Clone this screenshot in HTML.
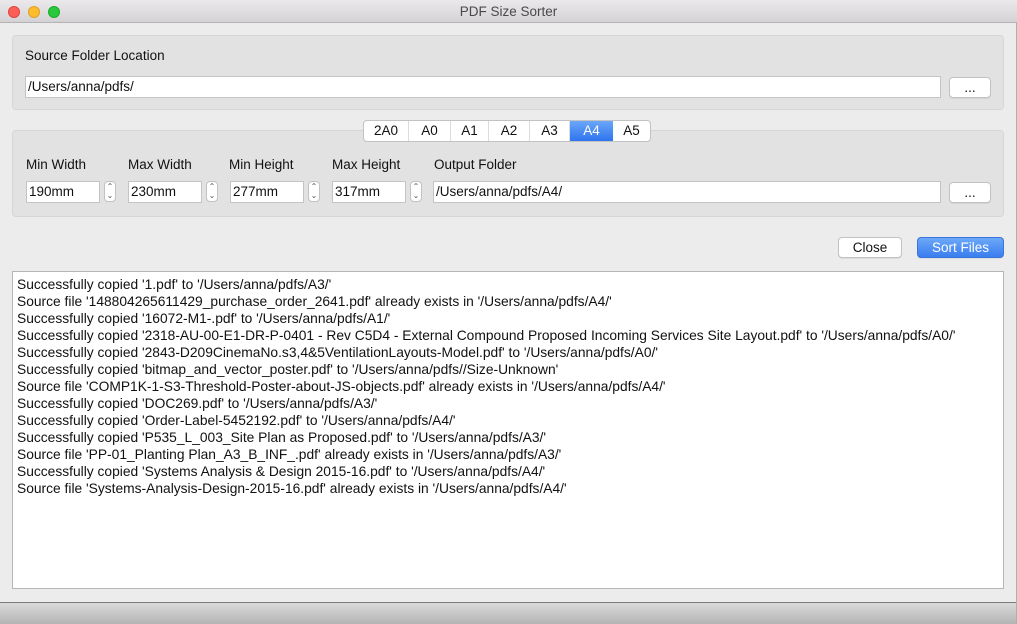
<!DOCTYPE html>
<html><head><meta charset="utf-8"><style>
*{box-sizing:border-box;margin:0;padding:0}
body{width:1017px;height:624px;overflow:hidden;background:#ececec;font-family:"Liberation Sans",sans-serif;font-size:13.5px;color:#111;position:relative}
.a{position:absolute}
.title{left:0;top:0;width:1017px;height:23px;background:linear-gradient(#ebe9eb,#d4d2d4);border-bottom:1px solid #b3b3b3;text-align:center;line-height:23px;font-size:13.5px;color:#4a4a4a}
.dot{top:6px;width:12px;height:12px;border-radius:50%}
.grp{background:#e2e2e2;border:1px solid #d6d6d6;border-radius:4px}
.in{background:#fff;border:1px solid #c4c4c4;height:22px;line-height:20px;padding-left:2px;font-size:13.5px}
.btn{background:#fff;border:1px solid #c2c2c2;border-radius:4px;text-align:center;line-height:19px;box-shadow:0 1px 0 rgba(0,0,0,.06)}
.st{width:12px;height:21px;background:#fff;border:1px solid #c2c2c2;border-radius:4px;font-size:8px;line-height:9px;text-align:center;color:#555}
.seg{top:120px;left:363px;height:22px;width:288px;background:#fff;border:1px solid #c2c2c2;border-radius:4px;display:flex;overflow:hidden}
.seg div{text-align:center;line-height:20px;border-right:1px solid #dcdcdc}
.log{left:12px;top:271px;width:992px;height:318px;background:#fff;border:1px solid #b5b5b5;padding:4px 0 0 4px;line-height:17px;font-size:13.8px;white-space:pre}
</style></head><body>
<div class="a title">PDF Size Sorter</div>
<div class="a dot" style="left:8px;background:#fc5f57;border:1px solid #e0443e"></div>
<div class="a dot" style="left:28px;background:#fdbc2e;border:1px solid #dea123"></div>
<div class="a dot" style="left:48px;background:#29c83f;border:1px solid #1aab29"></div>

<div class="a grp" style="left:12px;top:35px;width:992px;height:75px"></div>
<div class="a" style="left:25px;top:48px">Source Folder Location</div>
<div class="a in" style="left:25px;top:76px;width:916px">/Users/anna/pdfs/</div>
<div class="a btn" style="left:949px;top:77px;width:42px;height:21px">...</div>

<div class="a grp" style="left:12px;top:130px;width:992px;height:87px"></div>
<div class="a seg">
<div style="width:45px">2A0</div><div style="width:42px">A0</div><div style="width:38px">A1</div><div style="width:41px">A2</div><div style="width:40px">A3</div><div style="width:43px;background:linear-gradient(#6aa6f8,#2f74ee);color:#fff;border-right:none">A4</div><div style="width:37px;border-right:none">A5</div>
</div>
<div class="a" style="left:26px;top:157px">Min Width</div>
<div class="a" style="left:128px;top:157px">Max Width</div>
<div class="a" style="left:229px;top:157px">Min Height</div>
<div class="a" style="left:332px;top:157px">Max Height</div>
<div class="a" style="left:434px;top:157px">Output Folder</div>
<div class="a in" style="left:26px;top:181px;width:74px">190mm</div>
<div class="a st" style="left:104px;top:181px">&#8963;<br>&#8964;</div>
<div class="a in" style="left:128px;top:181px;width:74px">230mm</div>
<div class="a st" style="left:206px;top:181px">&#8963;<br>&#8964;</div>
<div class="a in" style="left:230px;top:181px;width:74px">277mm</div>
<div class="a st" style="left:308px;top:181px">&#8963;<br>&#8964;</div>
<div class="a in" style="left:332px;top:181px;width:74px">317mm</div>
<div class="a st" style="left:410px;top:181px">&#8963;<br>&#8964;</div>
<div class="a in" style="left:433px;top:181px;width:508px">/Users/anna/pdfs/A4/</div>
<div class="a btn" style="left:949px;top:182px;width:42px;height:21px">...</div>

<div class="a btn" style="left:838px;top:237px;width:64px;height:21px">Close</div>
<div class="a btn" style="left:917px;top:237px;width:87px;height:21px;background:linear-gradient(#6ca8f8,#3a7df0);border-color:#3a75dc;color:#fff">Sort Files</div>

<div class="a log">Successfully copied '1.pdf' to '/Users/anna/pdfs/A3/'
Source file '148804265611429_purchase_order_2641.pdf' already exists in '/Users/anna/pdfs/A4/'
Successfully copied '16072-M1-.pdf' to '/Users/anna/pdfs/A1/'
Successfully copied '2318-AU-00-E1-DR-P-0401 - Rev C5D4 - External Compound Proposed Incoming Services Site Layout.pdf' to '/Users/anna/pdfs/A0/'
Successfully copied '2843-D209CinemaNo.s3,4&amp;5VentilationLayouts-Model.pdf' to '/Users/anna/pdfs/A0/'
Successfully copied 'bitmap_and_vector_poster.pdf' to '/Users/anna/pdfs//Size-Unknown'
Source file 'COMP1K-1-S3-Threshold-Poster-about-JS-objects.pdf' already exists in '/Users/anna/pdfs/A4/'
Successfully copied 'DOC269.pdf' to '/Users/anna/pdfs/A3/'
Successfully copied 'Order-Label-5452192.pdf' to '/Users/anna/pdfs/A4/'
Successfully copied 'P535_L_003_Site Plan as Proposed.pdf' to '/Users/anna/pdfs/A3/'
Source file 'PP-01_Planting Plan_A3_B_INF_.pdf' already exists in '/Users/anna/pdfs/A3/'
Successfully copied 'Systems Analysis &amp; Design 2015-16.pdf' to '/Users/anna/pdfs/A4/'
Source file 'Systems-Analysis-Design-2015-16.pdf' already exists in '/Users/anna/pdfs/A4/'</div>

<div class="a" style="left:0;top:602px;width:1017px;height:22px;border-top:1px solid #7a7a7a;background:linear-gradient(#dadada,#b4b4b4)"></div>
<div class="a" style="left:1016px;top:23px;width:1px;height:601px;background:#b0b0b0"></div>
</body></html>
